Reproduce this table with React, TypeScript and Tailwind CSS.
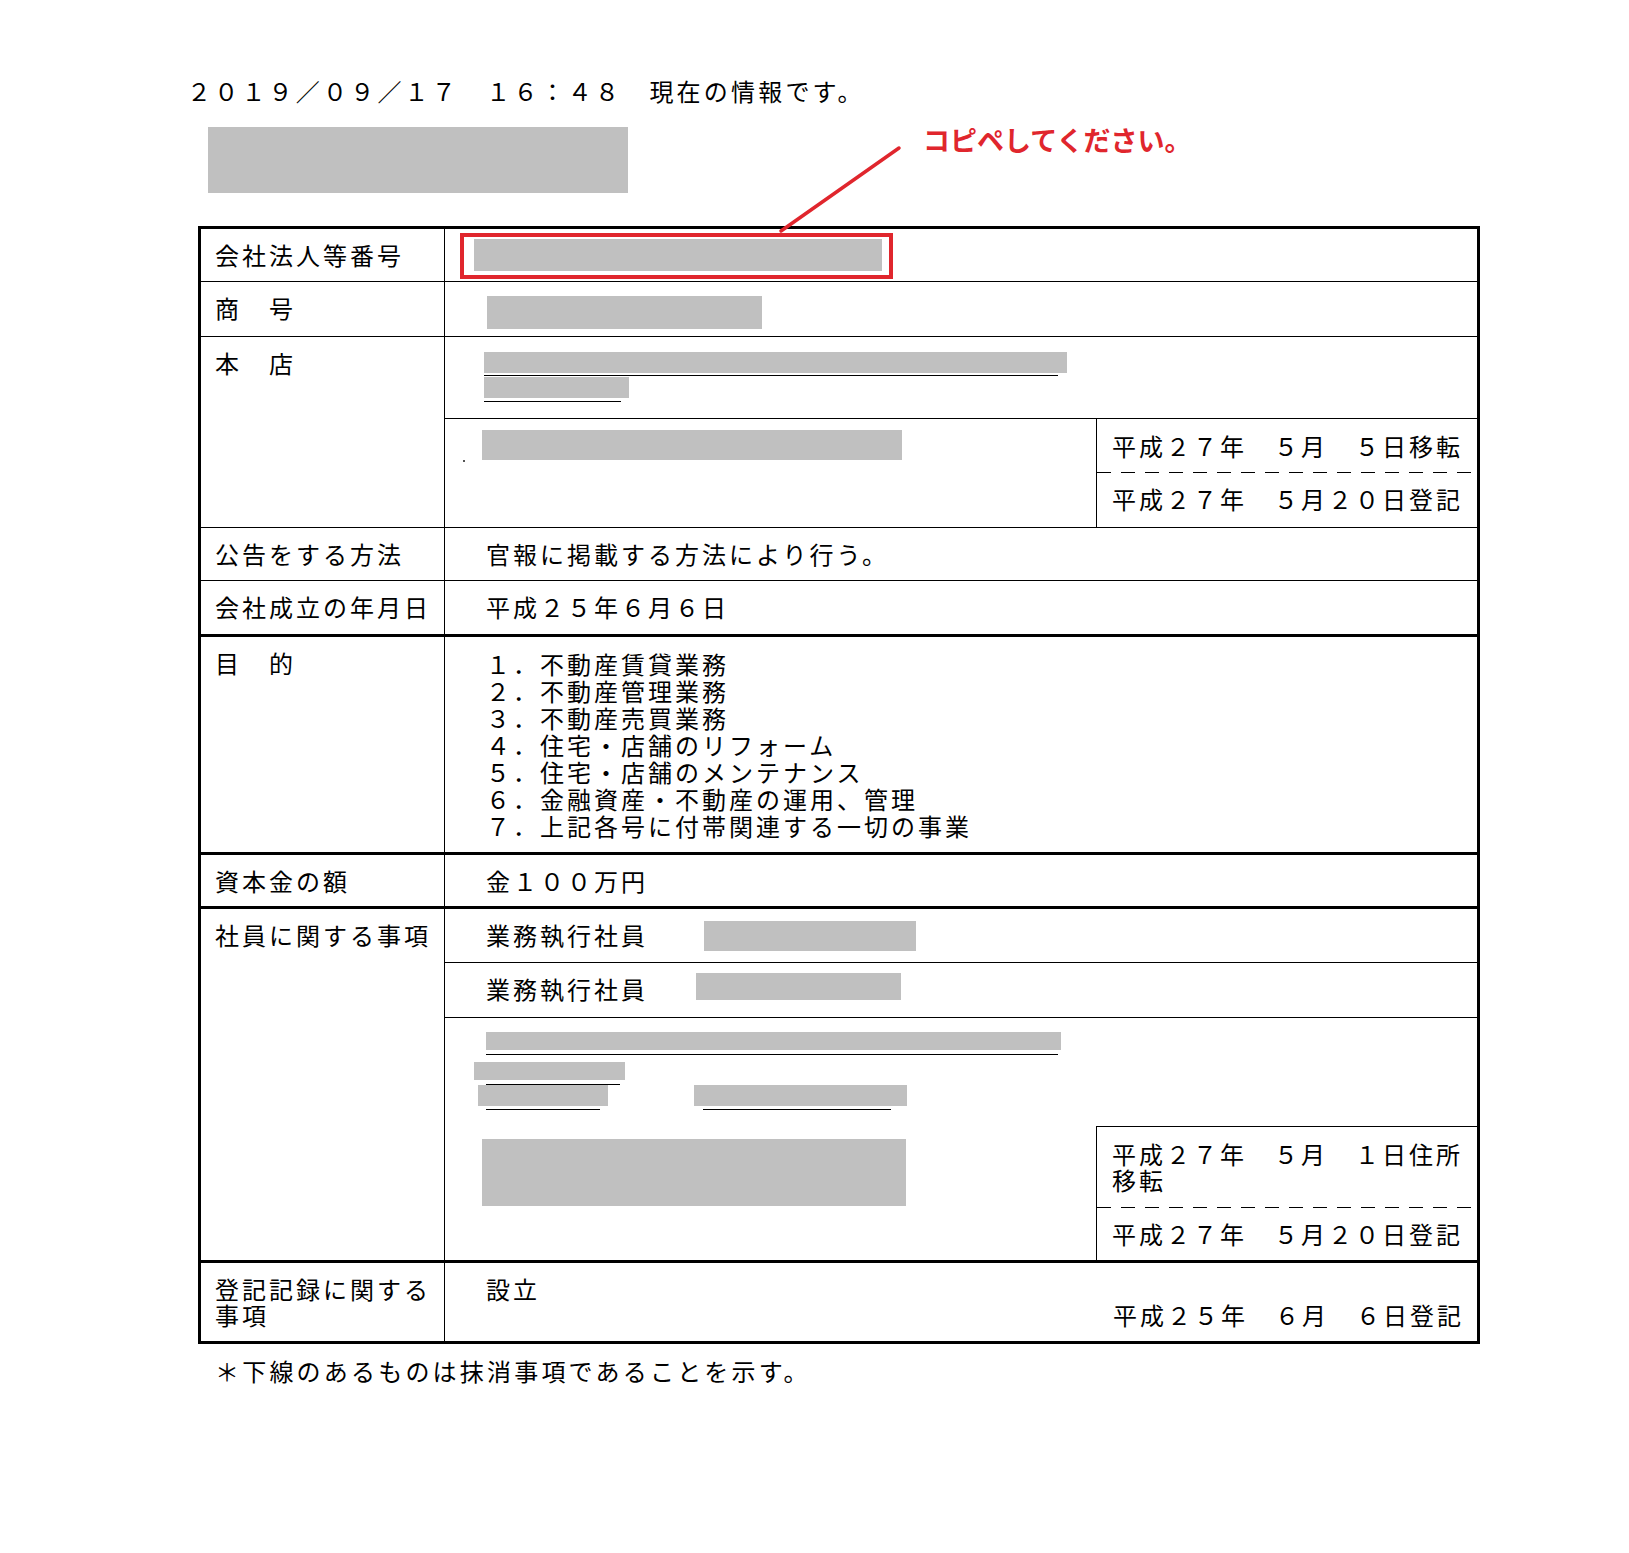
import type { ReactNode } from "react";

const gray = "bg-[#c0c0c0]";
const dashed =
  "h-px bg-[image:repeating-linear-gradient(90deg,#000_0px,#000_14px,transparent_14px,transparent_24px)]";

function Label({ children }: { children: ReactNode }) {
  return (
    <div className="w-[244px] shrink-0 border-r border-black pl-[14px] pt-[13px]">
      {children}
    </div>
  );
}

// right-side date box (移転 / 登記)
function DateBox({ top, bottom, topH }: { top: ReactNode; bottom: ReactNode; topH: string }) {
  return (
    <div className="flex w-[381px] shrink-0 flex-col border-l border-black">
      <div className={`${topH} pl-[15px] pt-[14px]`}>{top}</div>
      <div className={dashed} />
      <div className="flex-1 pl-[15px] pt-[13px]">{bottom}</div>
    </div>
  );
}

export default function App() {
  return (
    <div className="relative min-h-[1553px] w-[1629px] bg-white font-['Noto_Sans_CJK_JP',sans-serif] text-[24px] leading-[26px] tracking-[3px] text-black">
      {/* header */}
      <div className="pl-[187px] pt-[78px] tracking-[3.2px]">
        ２０１９／０９／１７　１６：４８　現在の情報です。
      </div>
      <div className={`ml-[208px] mt-[23px] h-[66px] w-[420px] ${gray}`} />

      {/* annotation */}
      <div className="absolute left-[923px] top-[126px] text-[27px] font-bold leading-[28px] tracking-normal text-[#e0262d]">
        コピペしてください。
      </div>
      <svg className="absolute left-[775px] top-[142px]" width="130" height="95" viewBox="0 0 130 95">
        <line x1="124" y1="6" x2="6" y2="89" stroke="#e0262d" strokeWidth="3.5" strokeLinecap="round" />
      </svg>

      {/* table */}
      <div className="ml-[198px] mt-[33px] w-[1282px] border-[3px] border-black">
        <div className="flex h-[53px] border-b border-black">
          <Label>会社法人等番号</Label>
          <div className="flex-1 pl-[15px] pt-[4px]">
            <div className="h-[46px] w-[433px] border-[4px] border-[#e0262d] pl-[10px] pt-[2px]">
              <div className={`h-[32px] w-[408px] ${gray}`} />
            </div>
          </div>
        </div>

        <div className="flex h-[55px] border-b border-black">
          <Label>商　号</Label>
          <div className="flex-1 pl-[42px] pt-[14px]">
            <div className={`h-[33px] w-[275px] ${gray}`} />
          </div>
        </div>

        <div className="flex h-[191px] border-b border-black">
          <Label>本　店</Label>
          <div className="flex flex-1 flex-col">
            <div className="h-[82px] border-b border-black pl-[39px] pt-[15px]">
              <div className={`h-[21px] w-[583px] ${gray}`} />
              <div className="mt-[2px] h-px w-[574px] bg-black" />
              <div className={`mt-[1px] h-[21px] w-[145px] ${gray}`} />
              <div className="mt-[3px] h-px w-[137px] bg-black" />
            </div>
            <div className="flex flex-1">
              <div className="flex-1 pl-[37px] pt-[11px]">
                <div className={`h-[30px] w-[420px] ${gray}`} />
                <div className="ml-[-19px] h-[2px] w-[2px] bg-[#555]" />
              </div>
              <DateBox
                topH="h-[53px]"
                top="平成２７年　５月　５日移転"
                bottom="平成２７年　５月２０日登記"
              />
            </div>
          </div>
        </div>

        <div className="flex h-[53px] border-b border-black">
          <Label>公告をする方法</Label>
          <div className="flex-1 pl-[41px] pt-[13px]">官報に掲載する方法により行う。</div>
        </div>

        <div className="flex h-[56px] border-b-[3px] border-black">
          <Label>会社成立の年月日</Label>
          <div className="flex-1 pl-[41px] pt-[13px]">平成２５年６月６日</div>
        </div>

        <div className="flex h-[218px] border-b-[3px] border-black">
          <Label>目　的</Label>
          <div className="flex-1 pl-[41px] pt-[13px] leading-[27px]">
            <div>１．不動産賃貸業務</div>
            <div>２．不動産管理業務</div>
            <div>３．不動産売買業務</div>
            <div>４．住宅・店舗のリフォーム</div>
            <div>５．住宅・店舗のメンテナンス</div>
            <div>６．金融資産・不動産の運用、管理</div>
            <div>７．上記各号に付帯関連する一切の事業</div>
          </div>
        </div>

        <div className="flex h-[54px] border-b-[3px] border-black">
          <Label>資本金の額</Label>
          <div className="flex-1 pl-[41px] pt-[13px]">金１００万円</div>
        </div>

        <div className="flex h-[354px] border-b-[3px] border-black">
          <Label>社員に関する事項</Label>
          <div className="flex flex-1 flex-col">
            <div className="flex h-[54px] border-b border-black pl-[41px]">
              <div className="pt-[13px]">業務執行社員</div>
              <div className={`ml-[56px] mt-[12px] h-[30px] w-[212px] ${gray}`} />
            </div>
            <div className="flex h-[55px] border-b border-black pl-[41px]">
              <div className="pt-[13px]">業務執行社員</div>
              <div className={`ml-[48px] mt-[10px] h-[27px] w-[205px] ${gray}`} />
            </div>
            <div className="flex flex-1">
              <div className="flex flex-1 flex-col">
                <div className={`ml-[41px] mt-[14px] h-[18px] w-[575px] ${gray}`} />
                <div className="ml-[41px] mt-[4px] h-px w-[572px] bg-black" />
                <div className={`ml-[29px] mt-[7px] h-[18px] w-[151px] ${gray}`} />
                <div className="ml-[41px] mt-[4px] h-px w-[134px] bg-black" />
                <div className="flex">
                  <div className={`ml-[33px] h-[21px] w-[130px] ${gray}`} />
                  <div className={`ml-[86px] h-[21px] w-[213px] ${gray}`} />
                </div>
                <div className="mt-[3px] flex">
                  <div className="ml-[41px] h-px w-[114px] bg-black" />
                  <div className="ml-[103px] h-px w-[188px] bg-black" />
                </div>
                <div className={`ml-[37px] mt-[29px] h-[67px] w-[424px] ${gray}`} />
              </div>
              <div className="mt-[108px] flex border-t border-black">
                <DateBox
                  topH="h-[80px]"
                  top={
                    <>
                      平成２７年　５月　１日住所
                      <br />
                      移転
                    </>
                  }
                  bottom="平成２７年　５月２０日登記"
                />
              </div>
            </div>
          </div>
        </div>

        <div className="flex h-[78px]">
          <Label>
            登記記録に関する
            <br />
            事項
          </Label>
          <div className="flex-1 pl-[41px] pt-[13px]">
            <div>設立</div>
            <div className="pl-[627px]">平成２５年　６月　６日登記</div>
          </div>
        </div>
      </div>

      <div className="pl-[215px] pt-[14px] tracking-[3.2px]">＊下線のあるものは抹消事項であることを示す。</div>
    </div>
  );
}
